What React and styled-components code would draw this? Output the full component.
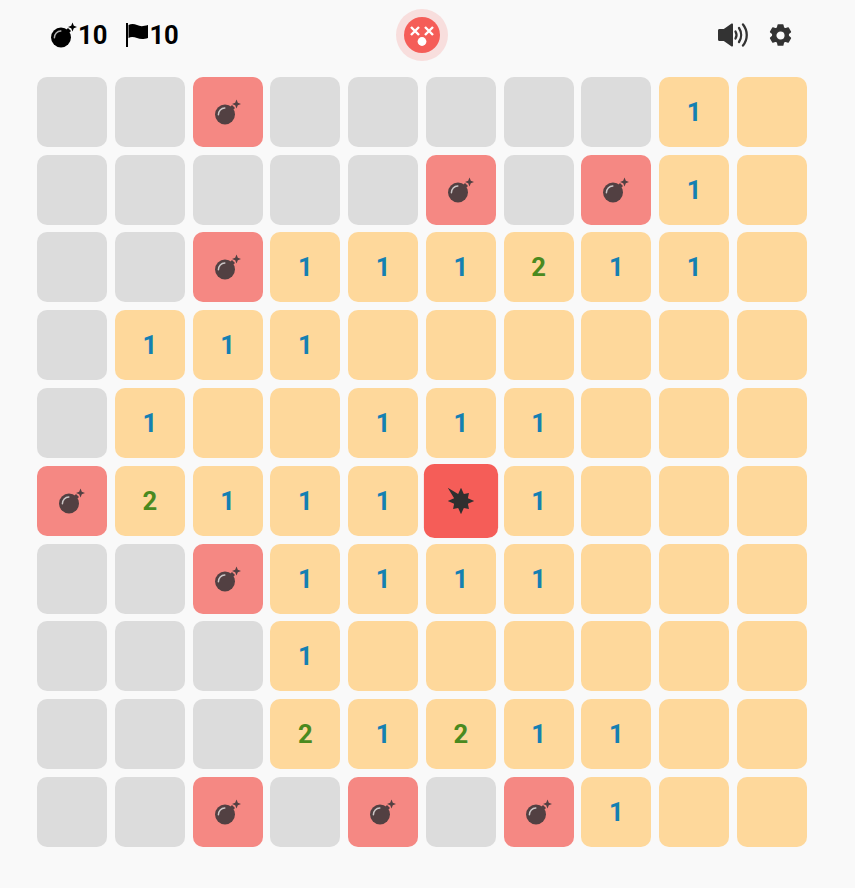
import styled, { createGlobalStyle } from "styled-components"

const board = [
    "ggBggggg1_",
    "gggggBgB1_",
    "ggB111211_",
    "g111______",
    "g1__111___",
    "B2111X1___",
    "ggB1111___",
    "ggg1______",
    "ggg21211__",
    "ggBgBgB1__",
]

const GlobalStyle = createGlobalStyle`
    html, body {
        margin: 0;
        background-color: #f9f9f9;
    }
    body {
        font-family: Roboto, "Liberation Sans", sans-serif;
    }
`
const Page = styled.div`
    width: 770px;
    height: 888px;
    margin-left: 37px;
`
const Header = styled.header`
    display: grid;
    grid-template-columns: 1fr auto 1fr;
    align-items: center;
    height: 70px;
    margin-bottom: 6.8px;
    padding: 0 14px;
`
const Counters = styled.div`
    display: flex;
    align-items: center;
    gap: 18px;
`
const Counter = styled.div`
    display: flex;
    align-items: center;
    gap: 1px;
    font-size: 25.6px;
    font-weight: 700;
    line-height: 28px;
    color: #000;
`
const Face = styled.div`
    display: flex;
    align-items: center;
    justify-content: center;
    width: 52px;
    height: 52px;
    border-radius: 50%;
    background-color: #f8dedd;
`
const Controls = styled.div`
    display: flex;
    align-items: center;
    justify-content: flex-end;
    gap: 19px;
`
const Board = styled.div`
    display: grid;
    grid-template-columns: repeat(10, 70px);
    grid-auto-rows: 70px;
    row-gap: 7.8px;
    column-gap: 7.75px;
`
const cellColors = {
    g: "#dcdcdc",
    B: "#f58883",
    X: "#f55d58",
}
const Cell = styled.div`
    display: flex;
    align-items: center;
    justify-content: center;
    border-radius: 10px;
    font-size: 25.6px;
    font-weight: 700;
    background-color: ${({ $kind }) => cellColors[$kind] || "#fed89b"};
    color: ${({ $kind }) => ($kind === "2" ? "#4a8a1f" : "#1480b2")};
    transform: ${({ $kind }) => ($kind === "X" ? "scale(1.06)" : "none")};
`

const BombIcon = ({ color }) => (
    <svg width="26" height="26" viewBox="0 0 26 26">
        <circle cx="10" cy="15.500" r="10" fill={color} />
        <path d="M15 8l2-2 3 3-2 2z" fill={color} />
        <path d="M21.500 .5l1.300 3.200 3.200 1.300-3.200 1.300-1.300 3.200-1.300-3.200L17 5l3.200-1.300z" fill={color} />
        <path d="M3.400 15.800c0-3.800 2.800-6.700 6.400-6.800" fill="none" stroke="#fff" strokeOpacity="0.7" strokeWidth="1.500" strokeLinecap="round" />
    </svg>
)

const FlagIcon = () => (
    <svg width="23" height="24" viewBox="0 0 23 24">
        <path d="M1 0h2v24H1z" fill="#000" />
        <path d="M3.500 2C6 .5 9 .5 12 2s6 1.500 11 0v13c-5 1.500-8 1-11 0s-6-1.500-8.500 0z" fill="#000" />
    </svg>
)

const SoundIcon = () => (
    <svg width="31" height="24" viewBox="0 0 31 24">
        <path d="M0 7.500C0 6.700.6 6 1.400 6h4.400L13.600.6c.6-.4 1.400 0 1.400.8v21.200c0 .8-.8 1.200-1.400.8L5.800 18H1.400C.6 18 0 17.300 0 16.500z" fill="#333" />
        <g fill="none" stroke="#333" strokeWidth="2.300" strokeLinecap="round">
            <path d="M17.500 8.500c1.300 2.200 1.300 4.800 0 7" />
            <path d="M21 5c2.800 4.200 2.800 9.800 0 14" />
            <path d="M25 1.500c5 6.200 5 14.800 0 21" />
        </g>
    </svg>
)

const GearIcon = () => (
    <svg width="25" height="25" viewBox="0 0 24 24">
        <path
            fill="#333"
            stroke="#333"
            strokeWidth="1.400"
            strokeLinejoin="round"
            fillRule="evenodd"
            d="M9.800 1.800h4.400l.6 2.800 1.800 1 2.700-.9 2.200 3.800-2.100 1.900v2.200l2.100 1.900-2.200 3.800-2.700-.9-1.800 1-.6 2.800H9.800l-.6-2.800-1.800-1-2.700.9-2.200-3.800 2.100-1.900v-2.200L2.500 8.500l2.200-3.800 2.700.9 1.800-1zM12 7.400a4.600 4.600 0 1 0 0 9.200 4.600 4.600 0 0 0 0-9.200z"
        />
    </svg>
)

const FaceIcon = () => (
    <svg width="36" height="36" viewBox="0 0 36 36">
        <circle cx="18" cy="18" r="18" fill="#f55d58" />
        <g stroke="#fff" strokeWidth="2.400">
            <path d="M7 10l8 8M15 10l-8 8" />
            <path d="M21 10l8 8M29 10l-8 8" />
        </g>
        <circle cx="18" cy="24.500" r="4.400" fill="#fff" />
    </svg>
)

const BangIcon = () => (
    <svg width="26" height="26" viewBox="0 0 26 26">
        <path
            fill="#2f2f2f"
            d="M.5.5L10.300 6.500 13 .5l2.700 6L20.500 5.500l-1 4.800L25.500 13l-6 2.700 1 4.800-4.800-1L13 25.500l-2.700-6-4.800 1 1-4.800L.5 13l6-2.700z"
        />
    </svg>
)

const CellContent = ({ kind }) => {
    if (kind === "B") return <BombIcon color="#524042" />
    if (kind === "X") return <BangIcon />
    if (kind === "1" || kind === "2") return kind
    return null
}

const App = () => {
    return (
        <Page>
            <GlobalStyle />
            <Header>
                <Counters>
                    <Counter>
                        <BombIcon color="#000" />
                        10
                    </Counter>
                    <Counter>
                        <FlagIcon />
                        10
                    </Counter>
                </Counters>
                <Face>
                    <FaceIcon />
                </Face>
                <Controls>
                    <SoundIcon />
                    <GearIcon />
                </Controls>
            </Header>
            <Board>
                {board.map((row, r) =>
                    row.split("").map((kind, c) => (
                        <Cell key={`${r}-${c}`} $kind={kind}>
                            <CellContent kind={kind} />
                        </Cell>
                    ))
                )}
            </Board>
        </Page>
    )
}

export default App
